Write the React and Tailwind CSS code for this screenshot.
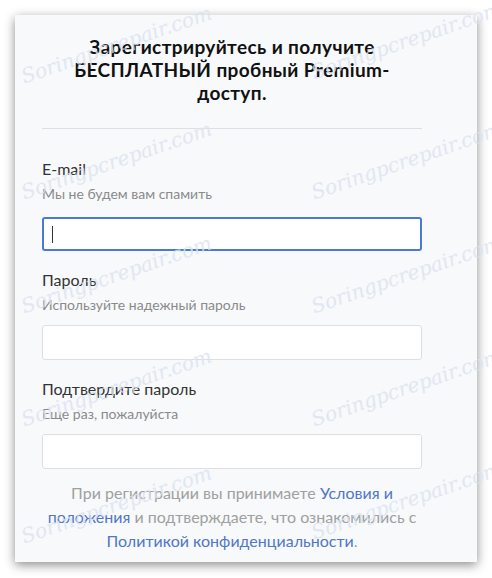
import React from "react";

const marks = [
  [22, 62], [312, 58],
  [22, 178], [312, 178],
  [22, 292], [312, 292],
  [22, 405], [312, 405],
  [22, 522], [312, 518],
];

function Field({ label, hint, focused, mt }) {
  return (
    <div className={mt}>
      <div className="text-[16px] leading-[22px] text-[#333]">{label}</div>
      <div className="mt-[4px] text-[14px] leading-[20px] text-[#8a8a8a]">{hint}</div>
      {focused ? (
        <div className="mt-[13px] h-[34px] rounded-[3px] border-2 border-[#4a7bd0] bg-white flex items-center pl-[8px]">
          <div className="w-px h-[17px] bg-[#333]" />
        </div>
      ) : (
        <div className="mt-[10px] h-[35px] rounded-[3px] border border-[#dedfe2] bg-white" />
      )}
    </div>
  );
}

export default function App() {
  return (
    <div className="relative w-[492px] h-[578px] bg-white overflow-hidden" style={{ fontFamily: "Lato, 'Noto Sans', sans-serif" }}>
      <div className="ml-[15px] mt-[15px] w-[462px] h-[547px] bg-[#f7f9fb] shadow-[0_3px_10px_rgba(0,0,0,0.45)] pl-[27px] pr-[55px] pt-[20px]">
        <h1 className="text-center text-[19px] leading-[23px] tracking-[0.02em] font-bold text-[#111] whitespace-nowrap">
          Зарегистрируйтесь и получите
          <br />
          БЕСПЛАТНЫЙ пробный Premium-
          <br />
          доступ.
        </h1>
        <div className="mt-[24px] h-px bg-[#dcdfe3]" />
        <Field mt="mt-[29px]" label="E-mail" hint="Мы не будем вам спамить" focused />
        <Field mt="mt-[18px]" label="Пароль" hint="Используйте надежный пароль" />
        <Field mt="mt-[18px]" label="Подтвердите пароль" hint="Еще раз, пожалуйста" />
        <p className="mt-[12px] text-center text-[16px] leading-[24px] text-[#a0a0a0] whitespace-nowrap">
          При регистрации вы принимаете <span className="text-[#5076c6]">Условия и</span>
          <br />
          <span className="text-[#5076c6]">положения</span> и подтверждаете, что ознакомились с
          <br />
          <span className="text-[#5076c6]">Политикой конфиденциальности</span>.
        </p>
      </div>
      {marks.map(([x, y], i) => (
        <div
          key={i}
          className="pointer-events-none absolute text-[20px] italic text-[#dce3f0] opacity-80 -rotate-[19deg] origin-left whitespace-nowrap"
          style={{ left: x, top: y, fontFamily: "'DejaVu Serif', serif" }}
        >
          Soringpcrepair.com
        </div>
      ))}
    </div>
  );
}
